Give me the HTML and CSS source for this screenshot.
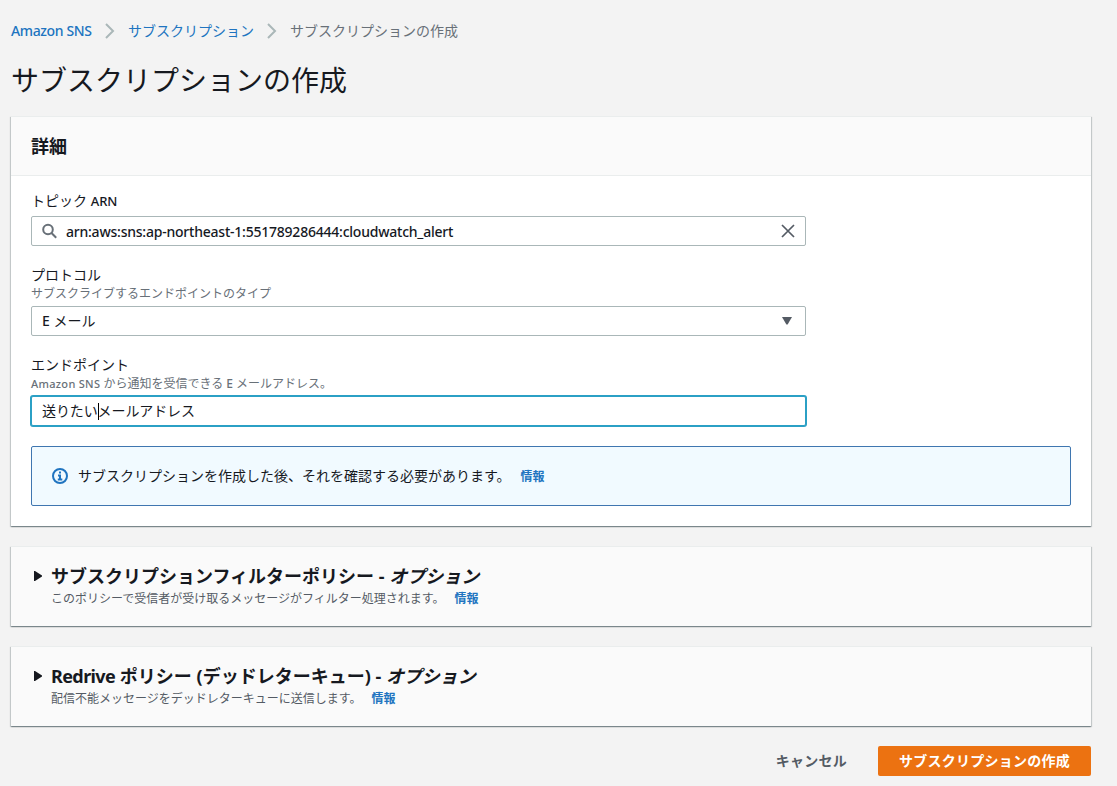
FILE: index.html
```
<!DOCTYPE html>
<html lang="ja">
<head>
    <meta charset="utf-8">
    <title>サブスクリプションの作成</title>
    <link rel="stylesheet" href="styles.css">
</head>
<body>
    <nav class="breadcrumbs">
        <a href="#" class="latin-link">Amazon SNS</a>
        <svg class="chevron" width="10" height="16" viewBox="0 0 10 16"><path d="M1 1l7 7-7 7"/></svg>
        <a href="#">サブスクリプション</a>
        <svg class="chevron" width="10" height="16" viewBox="0 0 10 16"><path d="M1 1l7 7-7 7"/></svg>
        <span>サブスクリプションの作成</span>
    </nav>
    <h1>サブスクリプションの作成</h1>

    <form>
        <section class="card">
            <div class="card-header">
                <h2>詳細</h2>
            </div>
            <div class="card-body">
                <div class="field">
                    <label>トピック <span class="label-latin">ARN</span></label>
                    <div class="control">
                        <svg class="search" width="16" height="16" viewBox="0 0 16 16"><circle cx="6" cy="6.5" r="4.8"/><path d="M9.5 10l4.7 4.7"/></svg>
                        <span class="value arn">arn:aws:sns:ap-northeast-1:551789286444:cloudwatch_alert</span>
                        <svg class="clear" width="14" height="14" viewBox="0 0 14 14"><path d="M1 1l12 12M13 1L1 13"/></svg>
                    </div>
                </div>
                <div class="field">
                    <label>プロトコル</label>
                    <p class="hint">サブスクライブするエンドポイントのタイプ</p>
                    <div class="control select">
                        <span class="value"><span class="latin">E</span> メール</span>
                        <svg width="10" height="8" viewBox="0 0 10 8"><path d="M0 0h10L5.6 7.6h-1.2z"/></svg>
                    </div>
                </div>
                <div class="field">
                    <label>エンドポイント</label>
                    <p class="hint"><span class="hint-latin">Amazon SNS</span> から通知を受信できる <span class="latin">E</span> メールアドレス。</p>
                    <div class="control focused">
                        <span class="value">送りたい<span class="caret"></span>メールアドレス</span>
                    </div>
                </div>
                <div class="alert">
                    <svg width="16" height="16" viewBox="0 0 16 16">
                        <circle cx="8" cy="8" r="7"/>
                        <path d="M8 3.6v2M6 7.5h2v4M5.8 11.4h4.5"/>
                    </svg>
                    <p>サブスクリプションを作成した後、それを確認する必要があります。<a href="#" class="info">情報</a></p>
                </div>
            </div>
        </section>

        <section class="card expandable">
            <svg class="arrow" width="8" height="10" viewBox="0 0 8 10"><path d="M0 0h1l7 4.5v1L1 10H0z"/></svg>
            <div>
                <h2>サブスクリプションフィルターポリシー - <i>オプション</i></h2>
                <p class="summary">このポリシーで受信者が受け取るメッセージがフィルター処理されます。<a href="#" class="info">情報</a></p>
            </div>
        </section>

        <section class="card expandable">
            <svg class="arrow" width="8" height="10" viewBox="0 0 8 10"><path d="M0 0h1l7 4.5v1L1 10H0z"/></svg>
            <div>
                <h2><span class="title-latin">Redrive</span> ポリシー (デッドレターキュー) - <i>オプション</i></h2>
                <p class="summary">配信不能メッセージをデッドレターキューに送信します。<a href="#" class="info">情報</a></p>
            </div>
        </section>

        <div class="actions">
            <button type="button" class="cancel">キャンセル</button>
            <button type="button" class="submit">サブスクリプションの作成</button>
        </div>
    </form>
</body>
</html>
```

FILE: styles.css
```
* {
    box-sizing: border-box;
}
body {
    margin: 0;
    padding: 20px 26px 10px 11px;
    font-family: "Noto Sans", "Noto Sans CJK JP", sans-serif;
    font-size: 14px;
    line-height: 22px;
    color: #16191f;
    background: #f3f3f3;
}
h1, h2, p {
    margin: 0;
}
svg {
    display: block;
    flex: none;
    fill: none;
}
a {
    color: #2074c0;
    text-decoration: none;
}
.breadcrumbs {
    display: flex;
    align-items: center;
    height: 22px;
    color: #687078;
    white-space: nowrap;
}
.latin-link {
    width: 81px;
    font-weight: 500;
    letter-spacing: -0.38px;
}
.latin {
    font-weight: 500;
}
.chevron {
    margin: 0 13px;
    stroke: #aab7b8;
    stroke-width: 2;
}
h1 {
    margin-top: 20px;
    height: 36px;
    font-size: 28px;
    font-weight: 400;
    line-height: 36px;
}
form {
    margin-top: 18px;
}
.card {
    margin-bottom: 20px;
    background: #fff;
    border-top: 1px solid #eaeded;
    box-shadow: 0 1px 1px 0 rgba(0, 28, 36, 0.3), 1px 1px 1px 0 rgba(0, 28, 36, 0.15), -1px 1px 1px 0 rgba(0, 28, 36, 0.15);
}
.card-header {
    padding: 18px 20px;
    height: 59px;
    background: #fafafa;
    border-bottom: 1px solid #eaeded;
}
h2 {
    font-size: 18px;
    font-weight: 700;
    line-height: 22px;
}
.title-latin {
    letter-spacing: -0.6px;
}
.card-body {
    padding: 14px 20px 20px;
}
.field {
    margin-bottom: 18px;
}
.field label {
    display: block;
    height: 22px;
}
.label-latin {
    font-size: 13px;
    font-weight: 500;
}
.hint {
    height: 16px;
    font-size: 12px;
    line-height: 16px;
    color: #687078;
}
.hint-latin {
    font-size: 11px;
    font-weight: 500;
    letter-spacing: 0.3px;
}
.control {
    display: flex;
    align-items: center;
    width: 775px;
    height: 30px;
    margin-top: 4px;
    padding: 0 10px;
    border: 1px solid #aab7b8;
    border-radius: 2px;
    background: #fff;
}
.value {
    flex: 1;
    white-space: nowrap;
}
.arn {
    padding-top: 2px;
    font-weight: 500;
    letter-spacing: -0.225px;
}
.search {
    margin-right: 8px;
    stroke: #687078;
    stroke-width: 2;
}
.clear {
    stroke: #545b64;
    stroke-width: 1.7;
}
.select svg {
    margin-right: 3px;
    fill: #545b64;
}
.focused {
    border-color: #2ba0c5;
    box-shadow: 0 0 0 1px #2ba0c5;
}
.focused .value {
    padding-bottom: 1px;
    letter-spacing: -0.1px;
}
.caret {
    display: inline-block;
    width: 1px;
    height: 17px;
    margin-right: -1px;
    vertical-align: -4px;
    background: #000;
}
.alert {
    display: flex;
    align-items: center;
    height: 60px;
    margin-top: 20px;
    padding: 0 20px;
    border: 1px solid #3f76b0;
    border-radius: 2px;
    background: #f1faff;
}
.alert svg {
    margin-right: 10px;
    stroke: #2074c0;
    stroke-width: 2;
}
.info {
    margin-left: 10px;
    font-size: 12px;
    font-weight: 700;
}
.expandable {
    display: flex;
    height: 80px;
    padding: 18px 20px;
    background: #fafafa;
}
.arrow {
    margin: 6px 9px 0 3px;
    fill: #16191f;
}
.summary {
    padding-top: 1px;
    font-size: 12px;
    line-height: 22px;
    color: #545b64;
}
.actions {
    display: flex;
    justify-content: flex-end;
}
button {
    height: 30px;
    padding: 0 20px;
    border: 1px solid transparent;
    border-radius: 2px;
    font: inherit;
    font-weight: 700;
    letter-spacing: 0.25px;
    white-space: nowrap;
}
.cancel {
    margin-right: 10px;
    background: transparent;
    color: #545b64;
}
.submit {
    background: #ec7211;
    color: #fff;
}
```
